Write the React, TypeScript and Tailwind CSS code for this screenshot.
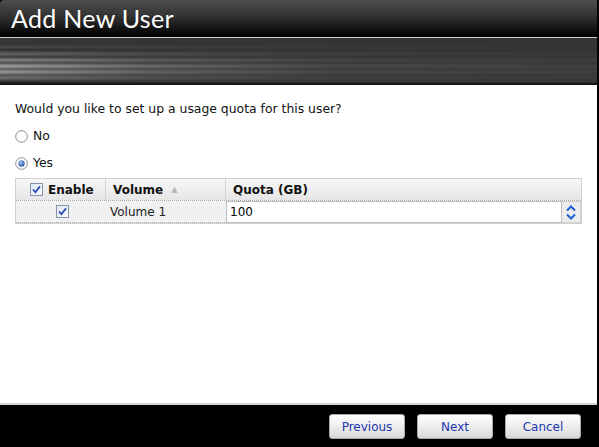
import React, { useState } from 'react';

function Check() {
  return (
    <svg width="13" height="13" viewBox="0 0 13 13" className="block">
      <defs>
        <linearGradient id="cbg" x1="0" y1="0" x2="1" y2="1">
          <stop offset="0" stopColor="#dfe6f2" />
          <stop offset="1" stopColor="#f8fafd" />
        </linearGradient>
      </defs>
      <rect x="0.5" y="0.5" width="12" height="12" fill="url(#cbg)" stroke="#8593a9" />
      <path d="M3 6.5 L5.4 9.2 L10 3.4" fill="none" stroke="#2a49b8" strokeWidth="1.8" />
    </svg>
  );
}

function Radio({ on }: { on?: boolean }) {
  return (
    <svg width="13" height="13" viewBox="0 0 13 13" className="block">
      <defs>
        <radialGradient id="rdot" cx="0.4" cy="0.35" r="0.7">
          <stop offset="0" stopColor="#9fc3f3" />
          <stop offset="1" stopColor="#1f4d9e" />
        </radialGradient>
      </defs>
      <circle cx="6.5" cy="6.5" r="5.8" fill="#fff" stroke="#8c8c8c" />
      {on && <circle cx="6.5" cy="6.5" r="3.2" fill="url(#rdot)" />}
    </svg>
  );
}

function WizButton({ label }: { label: string }) {
  return (
    <button className="w-[76px] h-[25px] rounded-[3px] border border-[#a9a9a9] bg-[linear-gradient(#fdfdfd,#ececec_55%,#d9d9d9)] text-[12px] text-[#2337b0] font-['DejaVu_Sans',sans-serif]">
      {label}
    </button>
  );
}

export default function App() {
  const [mode, setMode] = useState<'no' | 'yes'>('yes');
  const [quota, setQuota] = useState('100');

  return (
    <div className="w-[599px] h-[447px] flex flex-col bg-black border-r-2 border-black overflow-hidden font-['DejaVu_Sans',sans-serif]">
      {/* title bar */}
      <div className="h-[37px] shrink-0 rounded-tl-[4px] bg-[linear-gradient(#4d4d4d,#353535_40%,#111_80%,#000)] flex items-center pl-[11px]">
        <h1 className="text-[25px] leading-none text-white font-['Lato',sans-serif] tracking-[0.3px] mt-[-1px]">Add New User</h1>
      </div>
      <div className="h-[1px] shrink-0 bg-[#c9cfcc]" />
      {/* brushed metal band */}
      <div className="h-[47px] shrink-0 border-b-[2px] border-[#151515] bg-[linear-gradient(to_right,rgba(52,52,52,0)_0%,rgba(52,52,52,0.5)_25%,rgba(52,52,52,0.8)_55%,rgba(52,52,52,0.88)_100%),linear-gradient(#3a3a3a_0px,#333_6px,#4a4a4a_9px,#2e2e2e_12px,#666_16px,#3a3a3a_19px,#888_22px,#4d4d4d_25px,#a5a5a5_28px,#5c5c5c_31px,#999_34px,#555_37px,#707070_40px,#2a2a2a_44px)]" />

      {/* content */}
      <div className="flex-1 bg-white px-[15px] pt-[16px] text-[12.4px] text-[#111]">
        <p className="leading-[16px]">Would you like to set up a usage quota for this user?</p>
        <label className="mt-[11px] flex items-center gap-[5px] leading-[16px]" onClick={() => setMode('no')}>
          <Radio on={mode === 'no'} />
          <span>No</span>
        </label>
        <label className="mt-[11px] flex items-center gap-[5px] leading-[16px]" onClick={() => setMode('yes')}>
          <Radio on={mode === 'yes'} />
          <span>Yes</span>
        </label>

        <div className="mt-[7px] w-[567px] border border-[#d0d0d0] text-[12px]">
          <div className="flex h-[22px] bg-[linear-gradient(#f7f7f7,#e6e6e6)] border-b border-dotted border-[#a8a8a8] font-bold text-[#111]">
            <div className="w-[90px] flex items-center gap-[5px] pl-[14px] border-r border-[#d3d3d3]">
              <Check />
              <span>Enable</span>
            </div>
            <div className="w-[120px] flex items-center pl-[7px] border-r border-[#d3d3d3]">
              <span>Volume</span>
              <span className="ml-[8px] text-[8px] text-[#b5b5b5] font-normal">▲</span>
            </div>
            <div className="flex-1 flex items-center pl-[7px]">Quota (GB)</div>
          </div>
          <div className="flex h-[22px] bg-[#f0f0f0] border-b border-dotted border-[#a8a8a8]">
            <div className="w-[90px] flex items-center justify-center pl-[2px]">
              <Check />
            </div>
            <div className="w-[120px] flex items-center pl-[4px] text-[#222]">Volume 1</div>
            <div className="flex-1 flex">
              <input
                value={quota}
                onChange={e => setQuota(e.target.value)}
                className="flex-1 h-[22px] border border-[#bdbdbd] bg-white px-[3px] text-[12px] text-black outline-none"
              />
              <div className="w-[19px] h-[22px] flex flex-col items-center justify-center gap-[1px] border border-l-0 border-[#cfcfcf] bg-[#ececec]">
                <svg width="10" height="7" viewBox="0 0 10 7"><path d="M1 5.5 L5 1.5 L9 5.5" fill="none" stroke="#1f5fd6" strokeWidth="2" /></svg>
                <svg width="10" height="7" viewBox="0 0 10 7"><path d="M1 1.5 L5 5.5 L9 1.5" fill="none" stroke="#1f5fd6" strokeWidth="2" /></svg>
              </div>
            </div>
          </div>
        </div>
      </div>

      {/* footer */}
      <div className="h-[2px] shrink-0 bg-[#d6d6d6]" />
      <div className="h-[42px] shrink-0 bg-black flex items-center justify-end gap-[12px] pr-[16px] pt-[1px]">
        <WizButton label="Previous" />
        <WizButton label="Next" />
        <WizButton label="Cancel" />
      </div>
    </div>
  );
}
